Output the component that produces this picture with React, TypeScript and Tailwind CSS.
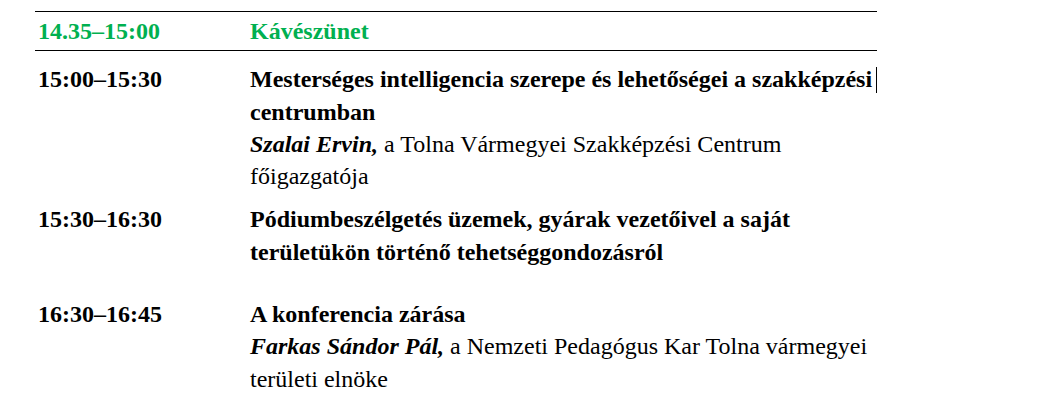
import React from "react";

const serif = { fontFamily: '"Liberation Serif", "Times New Roman", serif' };

export default function App() {
  return (
    <div className="w-[1046px] h-[413px] bg-white text-black overflow-hidden" style={serif}>
      <div className="pt-[11px] pl-[35px]">
        <div className="w-[842px] text-[24px] leading-[32.3px]">
          {/* Coffee break row */}
          <div className="grid grid-cols-[215px_627px] border-t border-b border-black pt-[3px] pb-[3px] font-bold text-[#00b050]">
            <div className="pl-[3px]">14.35–15:00</div>
            <div>Kávészünet</div>
          </div>

          {/* Row 1 */}
          <div className="relative grid grid-cols-[215px_627px] pt-[12px]">
            <div className="pl-[3px] font-bold">15:00–15:30</div>
            <div>
              <div className="font-bold">
                Mesterséges intelligencia szerepe és lehetőségei a szakképzési
                <br />
                centrumban
              </div>
              <div>
                <span className="font-bold italic">Szalai Ervin,</span> a Tolna Vármegyei Szakképzési Centrum
                <br />
                főigazgatója
              </div>
            </div>
            <div className="absolute right-0 top-[16px] h-[26px] w-px bg-black" />
          </div>

          {/* Row 2 */}
          <div className="grid grid-cols-[215px_627px] pt-[11px]">
            <div className="pl-[3px] font-bold">15:30–16:30</div>
            <div className="font-bold">
              Pódiumbeszélgetés üzemek, gyárak vezetőivel a saját
              <br />
              területükön történő tehetséggondozásról
            </div>
          </div>

          {/* Row 3 */}
          <div className="grid grid-cols-[215px_627px] pt-[30px]">
            <div className="pl-[3px] font-bold">16:30–16:45</div>
            <div>
              <div className="font-bold">A konferencia zárása</div>
              <div>
                <span className="font-bold italic">Farkas Sándor Pál,</span> a Nemzeti Pedagógus Kar Tolna vármegyei
                <br />
                területi elnöke
              </div>
            </div>
          </div>
        </div>
      </div>
    </div>
  );
}
